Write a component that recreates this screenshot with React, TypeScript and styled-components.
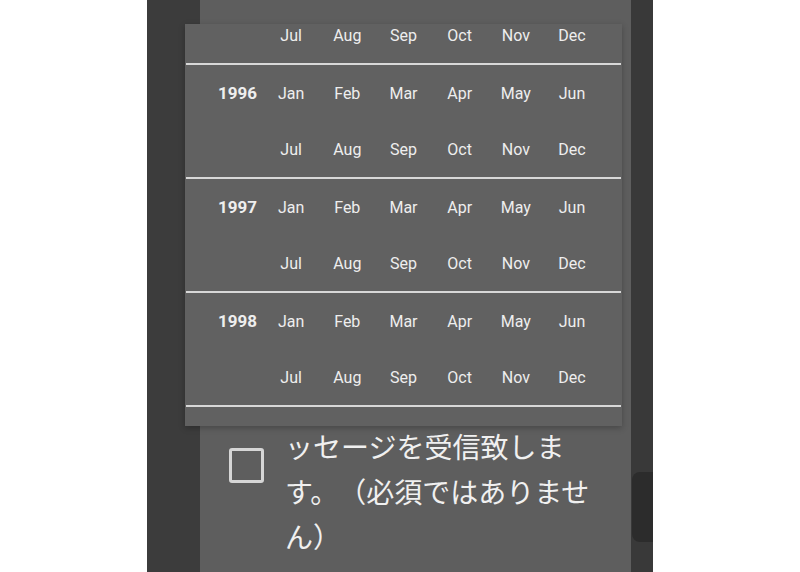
import React from 'react';
import styled, { createGlobalStyle } from 'styled-components';

const FIRST_HALF = ['Jan', 'Feb', 'Mar', 'Apr', 'May', 'Jun'];
const SECOND_HALF = ['Jul', 'Aug', 'Sep', 'Oct', 'Nov', 'Dec'];
const YEARS = [1996, 1997, 1998];

const GlobalStyle = createGlobalStyle`
  html, body {
    margin: 0;
    padding: 0;
    background: #ffffff;
    overflow: hidden;
  }
`;

const Page = styled.div`
  width: 800px;
  height: 572px;
  display: flex;
  justify-content: center;
  background: #ffffff;
`;

const Screen = styled.div`
  position: relative;
  width: 506px;
  height: 572px;
  display: flex;
  background: #3c3c3c;
  overflow: hidden;
`;

const Content = styled.div`
  flex: 1;
  padding-left: 53px;
  display: flex;
`;

const Panel = styled.div`
  flex: 1;
  background: #5e5e5e;
  padding-top: 424px;
  box-sizing: border-box;
`;

const CheckRow = styled.div`
  display: flex;
  align-items: flex-start;
  padding-left: 29px;
  gap: 21px;
`;

const Checkbox = styled.div`
  flex: none;
  width: 35px;
  height: 35px;
  margin-top: 24px;
  box-sizing: border-box;
  border: 3px solid #d6d6d6;
  border-radius: 3px;
`;

const Label = styled.div`
  width: 315px;
  font-family: 'Noto Sans CJK JP', 'Noto Sans', sans-serif;
  font-size: 28px;
  line-height: 45px;
  color: #f0f0f0;
  text-spacing-trim: space-all;
`;

const ScrollTrack = styled.div`
  width: 22px;
  background: #393939;
  padding-top: 472px;
  box-sizing: border-box;
`;

const Thumb = styled.div`
  height: 70px;
  margin-left: 1px;
  background: #2c2c2c;
  border-radius: 8px 0 0 8px;
`;

const Dropdown = styled.div`
  position: absolute;
  left: 38px;
  top: 24px;
  width: 437px;
  height: 402px;
  background: #616161;
  box-shadow: 0 2px 6px rgba(0, 0, 0, 0.25);
  overflow: hidden;
`;

const List = styled.div<{ $offset: number }>`
  margin-top: ${(p) => -p.$offset}px;
`;

const YearBlock = styled.div<{ $first?: boolean }>`
  border-top: 2px solid ${(p) => (p.$first ? 'transparent' : '#d8d8d8')};
  margin: 0 1px;
`;

const BlockEnd = styled.div`
  border-top: 2px solid #d8d8d8;
  margin: 0 1px;
`;

const MonthRow = styled.div`
  display: grid;
  grid-template-columns: 77px repeat(6, 56.2px);
  height: 56px;
  align-items: center;
  font-family: Roboto, 'Liberation Sans', sans-serif;
  color: #eeeeee;
`;

const Year = styled.div`
  text-align: right;
  padding-right: 6px;
  font-size: 17px;
  font-weight: 700;
`;

const Month = styled.div`
  text-align: center;
  font-size: 16px;
`;

const HalfRow: React.FC<{ label?: number; months: string[] }> = ({ label, months }) => (
  <MonthRow>
    <Year>{label}</Year>
    {months.map((m) => (
      <Month key={m}>{m}</Month>
    ))}
  </MonthRow>
);

export default function App() {
  return (
    <>
      <GlobalStyle />
      <Page>
        <Screen>
          <Content>
            <Panel>
              <CheckRow>
                <Checkbox />
                <Label>ッセージを受信致します。（必須ではありません）</Label>
              </CheckRow>
            </Panel>
          </Content>
          <ScrollTrack>
            <Thumb />
          </ScrollTrack>
          <Dropdown>
            <List $offset={19}>
              <YearBlock $first>
                <HalfRow months={SECOND_HALF} />
              </YearBlock>
              {YEARS.map((year) => (
                <YearBlock key={year}>
                  <HalfRow label={year} months={FIRST_HALF} />
                  <HalfRow months={SECOND_HALF} />
                </YearBlock>
              ))}
              <BlockEnd />
            </List>
          </Dropdown>
        </Screen>
      </Page>
    </>
  );
}
